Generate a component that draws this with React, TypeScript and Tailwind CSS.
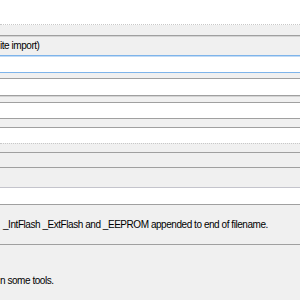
import React from 'react';

const Line = ({ c = 'bg-[#a0a0a0]' }: { c?: string }) => <div className={`h-px ${c}`} />;

const App: React.FC = () => {
  return (
    <div
      className="w-[300px] h-[300px] overflow-hidden bg-[#f0f0f0] text-[10px] tracking-[-0.45px] text-black leading-none"
      style={{ fontFamily: '"Liberation Sans", Arial, sans-serif' }}
    >
      {/* top white strip */}
      <div className="h-[25px] bg-white border-b border-dotted border-[#c8c8c8]" />
      <div className="h-[10px]" />
      <Line />
      <Line c="bg-[#d4d4d4]" />

      {/* import row */}
      <div className="h-[18px] flex items-center">
        <span>ite import)</span>
      </div>

      {/* focused textbox */}
      <Line c="bg-[#7eb4ea]" />
      <Line c="bg-[#c2dbf5]" />
      <div className="h-[15px] bg-white" />
      <Line c="bg-[#7eb4ea]" />
      <div className="h-[5px]" />
      <Line />
      <div className="h-[16px] bg-white" />
      <Line />
      <Line c="bg-[#d4d4d4]" />
      <div className="h-[5px]" />
      <Line />
      <div className="h-[15px] bg-white" />
      <Line />
      <div className="h-[8px]" />
      <Line />
      <div className="h-[15px] bg-white" />
      <div className="h-px border-t border-dotted border-[#c8c8c8]" />
      <div className="h-[8px]" />
      <Line />
      <div className="h-[14px]" />
      <Line />
      <div className="h-[19px]" />
      <Line c="bg-[#c4c4cc]" />
      <div className="h-[16px] bg-white" />
      <Line />

      {/* note about memory suffixes */}
      <div className="h-[39px] flex items-center pl-[3px]">
        <span className="whitespace-nowrap">_IntFlash _ExtFlash and _EEPROM appended to end of filename.</span>
      </div>
      <Line />

      <div className="h-[54px] flex items-end pb-[13px]">
        <span className="whitespace-nowrap">n some tools.</span>
      </div>
    </div>
  );
};

export default App;
